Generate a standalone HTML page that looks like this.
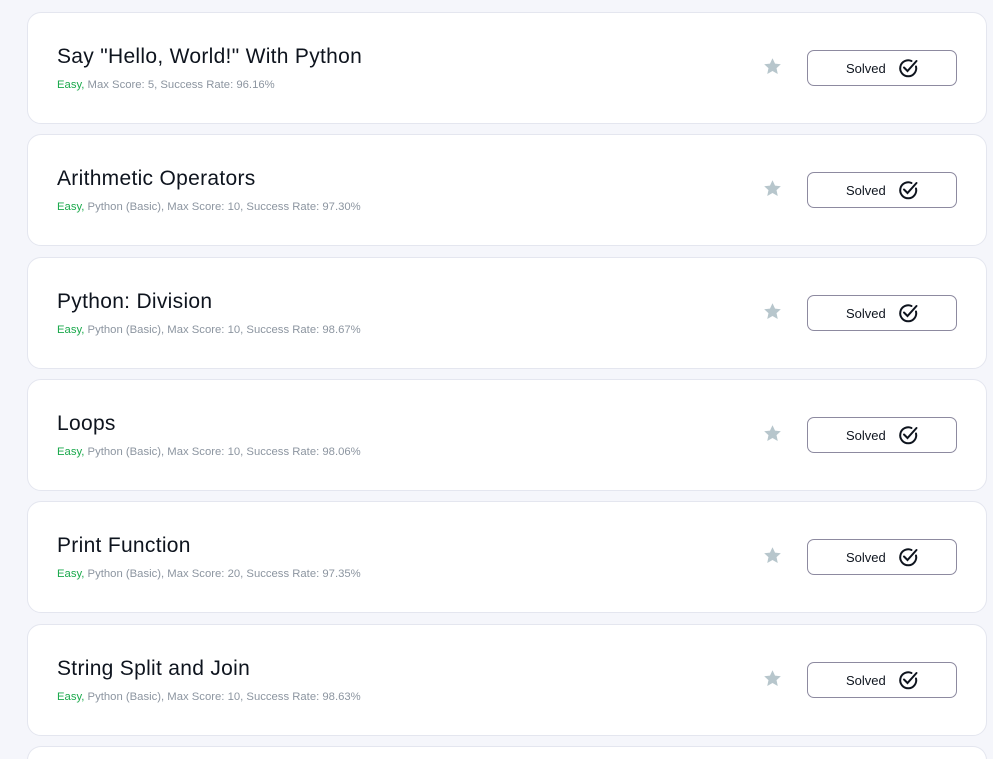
<!DOCTYPE html><html><head><style>
html,body{margin:0;background:#f5f6fb;width:993px;height:759px;overflow:hidden;font-family:"Liberation Sans",sans-serif;position:relative}
.c{position:absolute;left:27px;width:960px;height:112px;background:#fff;border:1px solid #e4e6ef;border-radius:14px;box-sizing:border-box}
.c.last{height:14px;border-bottom:none;border-radius:14px 14px 0 0}
.t{position:absolute;left:29px;top:32px;font-size:21px;color:#0e141e;letter-spacing:0.3px}
.s{position:absolute;left:29px;top:66px;font-size:11.3px;color:#8c95a0}
.s b{font-weight:normal;color:#1ba94c}
.st{position:absolute;left:734px;top:43px}
.btn{position:absolute;left:779px;top:37px;width:150px;height:36px;border:1px solid #8d8aa0;border-radius:7px;box-sizing:border-box;font-size:13px;color:#0e141e}
.btn span{position:absolute;left:38px;top:10px}
.btn svg{position:absolute;left:89px;top:6px}
</style></head><body>
<div id="w"></div>
<script>
const d=[["Say \"Hello, World!\" With Python","Max Score: 5, Success Rate: 96.16%"],["Arithmetic Operators","Python (Basic), Max Score: 10, Success Rate: 97.30%"],["Python: Division","Python (Basic), Max Score: 10, Success Rate: 98.67%"],["Loops","Python (Basic), Max Score: 10, Success Rate: 98.06%"],["Print Function","Python (Basic), Max Score: 20, Success Rate: 97.35%"],["String Split and Join","Python (Basic), Max Score: 10, Success Rate: 98.63%"],["",""]];
let h="";d.forEach((r,i)=>{const y=12+i*122.3;h+=`<div class="c${r[0]?'':' last'}" style="top:${y}px">`+(r[0]?`<div class="t">${r[0].replace(/"/g,'&quot;')}</div><div class="s"><b>Easy,</b> ${r[1]}</div>
<svg class="st" width="21" height="21" viewBox="0 0 24 24"><path d="M12 2.5l2.9 6.2 6.6.7-4.9 4.5 1.4 6.6L12 17.1l-6 3.4 1.4-6.6-4.9-4.5 6.6-.7z" fill="#b7c6cc"/></svg>
<div class="btn"><span>Solved</span><svg width="22" height="22" viewBox="0 0 22 22" fill="none" stroke="#0e141e" stroke-width="2" stroke-linecap="round"><path d="M19 9.5A8 8 0 1 1 14.5 4"/><path d="M7 10.5l3.5 3.5L19.5 4"/></svg></div>`:"")+`</div>`});
document.getElementById("w").innerHTML=h;
</script>
</body></html>
